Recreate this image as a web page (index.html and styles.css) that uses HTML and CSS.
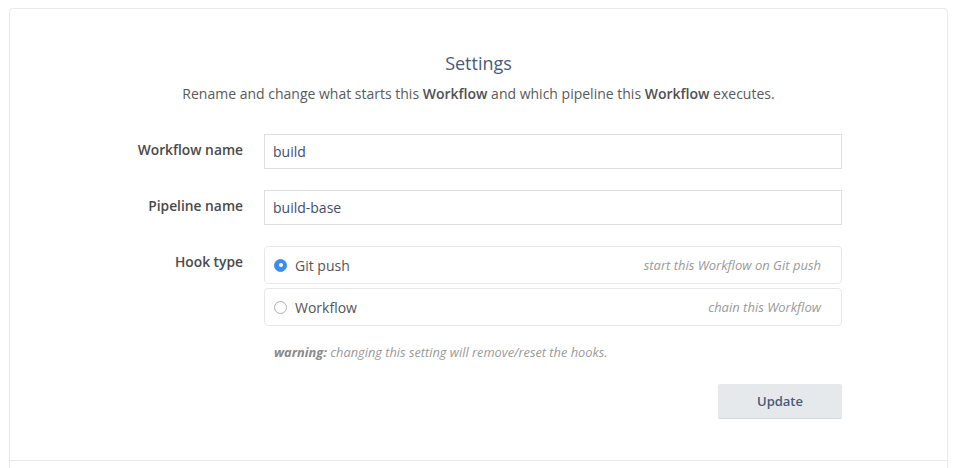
FILE: index.html
```html
<!DOCTYPE html>
<html>
<head>
<meta charset="utf-8">
<link rel="stylesheet" href="styles.css">
</head>
<body>
<div class="card">
  <div class="section">
    <h2 class="title">Settings</h2>
    <p class="subtitle">Rename and change what starts this <b>Workflow</b> and which pipeline this <b>Workflow</b> executes.</p>
    <div class="form">
      <label class="label">Workflow name</label>
      <div class="field"><div class="input">build</div></div>
      <label class="label">Pipeline name</label>
      <div class="field"><div class="input">build-base</div></div>
      <label class="label">Hook type</label>
      <div class="field">
        <div class="options">
          <div class="option">
            <span class="radio checked"></span>
            <span class="opt-name">Git push</span>
            <span class="opt-hint">start this Workflow on Git push</span>
          </div>
          <div class="option">
            <span class="radio"></span>
            <span class="opt-name">Workflow</span>
            <span class="opt-hint">chain this Workflow</span>
          </div>
        </div>
        <p class="warning"><b>warning:</b> changing this setting will remove/reset the hooks.</p>
        <div class="actions"><button class="btn">Update</button></div>
      </div>
    </div>
  </div>
  <div class="divider"></div>
</div>
</body>
</html>
```
FILE: styles.css
```css
html, body { margin: 0; padding: 0; background: #fff; }
body {
  font-family: "Open Sans", "Noto Sans", sans-serif;
  color: #555;
  padding: 8px 9px 0 9px;
  overflow: hidden;
  height: 468px;
  box-sizing: border-box;
}
.card {
  border: 1px solid #e8e9e9;
  border-bottom: none;
  border-radius: 4px 4px 0 0;
  height: 480px;
}
.section {
  padding: 41px 0 0 0;
  height: 410px;
}
.title {
  margin: 0;
  text-align: center;
  font-size: 18px;
  font-weight: 400;
  color: #4b5a78;
  line-height: 26px;
}
.subtitle {
  margin: 8px 0 0 0;
  text-align: center;
  font-size: 14px;
  line-height: 20px;
  color: #5a5a5a;
}
.subtitle b { font-weight: 600; color: #505050; }
.form {
  display: grid;
  grid-template-columns: 149px 1fr;
  row-gap: 21px;
  width: 727px;
  margin: 30px auto 0 auto;
}
.label {
  text-align: right;
  padding-right: 21px;
  font-size: 13.8px;
  font-weight: 600;
  color: #4a4a4a;
  line-height: 20px;
  padding-top: 6px;
}
.input {
  height: 35px;
  box-sizing: border-box;
  border: 1px solid #dcdfe0;
  padding: 0 8px;
  font-size: 14px;
  line-height: 33px;
  color: #3f4d6b;
}
.options { display: flex; flex-direction: column; gap: 4px; }
.option {
  height: 38px;
  box-sizing: border-box;
  border: 1px solid #e6e8e8;
  border-radius: 4px;
  display: flex;
  align-items: center;
  padding: 0 20px 0 9px;
}
.radio {
  width: 13px;
  height: 13px;
  border-radius: 50%;
  border: 1px solid #b0b0b0;
  box-sizing: border-box;
  margin-right: 8px;
  position: relative;
}
.radio.checked {
  background: #3b8ef0;
  border-color: #3b8ef0;
}
.radio.checked::after {
  content: "";
  position: absolute;
  width: 4px;
  height: 4px;
  border-radius: 50%;
  background: #fff;
  left: 3.5px;
  top: 3.5px;
}
.opt-name { font-size: 14px; color: #555; }
.opt-hint {
  margin-left: auto;
  font-size: 13px;
  font-style: italic;
  color: #9a9a9a;
}
.warning {
  margin: 17px 0 0 10px;
  font-size: 12.8px;
  font-style: italic;
  color: #9a9a9a;
  line-height: 18px;
}
.warning b { font-weight: 700; color: #8a8a8a; }
.actions {
  display: flex;
  justify-content: flex-end;
  margin-top: 23px;
}
.btn {
  width: 124px;
  height: 35px;
  border: none;
  border-bottom: 1px solid #d3d8dc;
  border-radius: 2px;
  background: #e6e9eb;
  font-family: "Open Sans", "Noto Sans", sans-serif;
  font-size: 13px;
  font-weight: 600;
  color: #4b5a78;
}
.divider {
  border-top: 1px solid #e6e8e8;
}
```
